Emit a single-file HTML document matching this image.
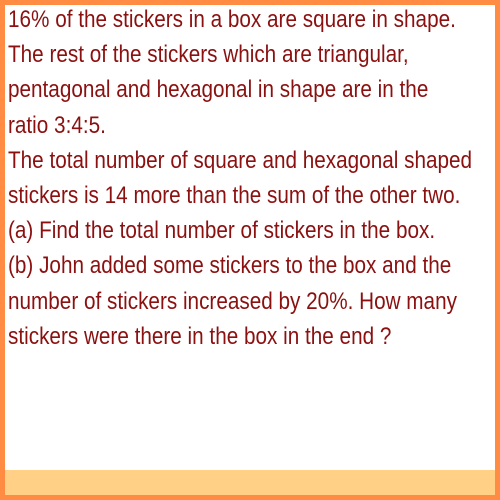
<!DOCTYPE html>
<html><head><style>
html,body{margin:0;padding:0;}
body{width:500px;height:500px;position:relative;overflow:hidden;background:#fff;}
.frame{position:absolute;left:0;top:0;width:490px;height:490px;border:5px solid #FF8C42;background:#fff;}
.band{position:absolute;left:5px;top:470px;width:490px;height:25px;background:#FFD086;}
.txt{position:absolute;left:8px;top:2px;width:560px;font-family:"Liberation Sans",sans-serif;font-size:24px;line-height:35.2px;color:#8B1010;white-space:nowrap;transform:scaleX(0.863);transform-origin:0 0;}
</style></head><body>
<div class="frame"></div>
<div class="band"></div>
<div class="txt">16% of the stickers in a box are square in shape.<br>The rest of the stickers which are triangular,<br>pentagonal and hexagonal in shape are in the<br>ratio 3:4:5.<br>The total number of square and hexagonal shaped<br>stickers is 14 more than the sum of the other two.<br>(a) Find the total number of stickers in the box.<br>(b) John added some stickers to the box and the<br>number of stickers increased by 20%. How many<br>stickers were there in the box in the end ?</div>
</body></html>
